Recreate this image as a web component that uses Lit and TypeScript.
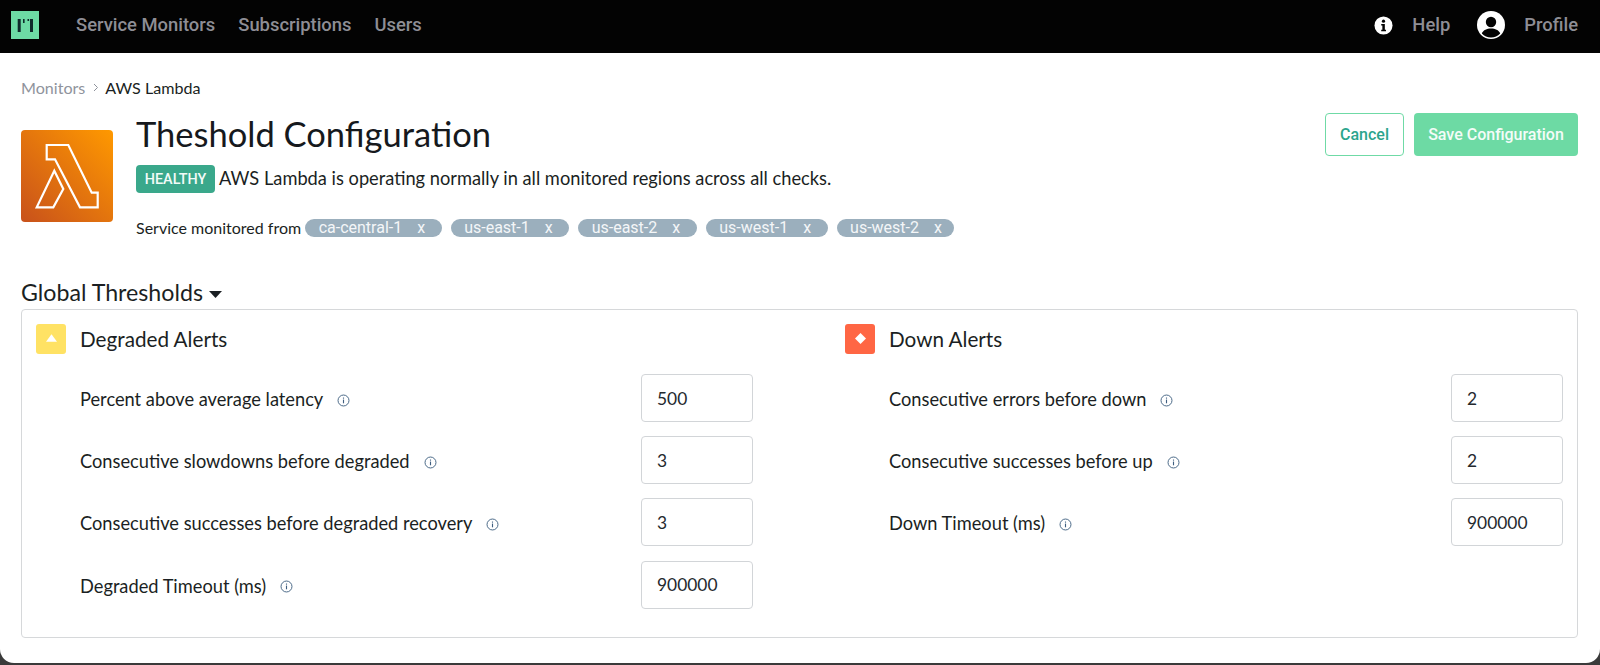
import { LitElement, html, css } from "lit";
import { customElement } from "lit/decorators.js";

const info = html`<svg class="tip" viewBox="0 0 14 14" width="13" height="13"><circle cx="7" cy="7" r="5.9" fill="none" stroke="#3f5f80" stroke-width="1"/><rect x="6.4" y="6" width="1.2" height="4" fill="#3f5f80"/><rect x="6.4" y="3.8" width="1.2" height="1.2" fill="#3f5f80"/></svg>`;

const regions = ["ca-central-1", "us-east-1", "us-east-2", "us-west-1", "us-west-2"];
const degraded = [
  ["Percent above average latency", "500"],
  ["Consecutive slowdowns before degraded", "3"],
  ["Consecutive successes before degraded recovery", "3"],
  ["Degraded Timeout (ms)", "900000"],
];
const down = [
  ["Consecutive errors before down", "2"],
  ["Consecutive successes before up", "2"],
  ["Down Timeout (ms)", "900000"],
];

@customElement("app-root")
export class AppRoot extends LitElement {
  static styles = css`
    :host { display: block; height: 665px; background: #3a3a3a; font-family: Lato, "Liberation Sans", sans-serif; color: #1b1f23; overflow: hidden; }
    .page { height: 663px; background: #fff; border-radius: 0 0 14px 14px; overflow: hidden; }
    header { height: 53px; box-sizing: border-box; padding: 0 22px 3px 11px; background: #030303; display: flex; align-items: center; font-family: Roboto, sans-serif; font-weight: 500; font-size: 18.4px; color: #8e8e95; }
    header span { margin-bottom: 1px; }
    .logo { width: 28px; height: 28px; margin-right: 37px; display: block; }
    .nav { margin-right: 23px; }
    .spacer { flex: 1; }
    .help-i { margin-right: 19px; margin-left: 1px; display: block; }
    .prof-i { margin: 0 19px 0 27px; display: block; }
    main { padding: 0 22px 0 21px; }
    .crumbs { display: flex; align-items: center; height: 20px; margin-top: 24px; font-size: 16.1px; color: #1b1f23; }
    .crumbs .m { color: #8f939c; }
    .crumbs svg { margin: 0 6px 0 8px; }
    .top { display: flex; margin-top: 15px; height: 158px; }
    .aws { width: 92px; height: 92px; border-radius: 4px; margin-top: 18px; margin-right: 23px; background: linear-gradient(45deg, #c8511b, #f90); flex: none; display: block; }
    .info { flex: 1; }
    h1 { margin: 0; font-weight: 400; font-size: 34.5px; line-height: 44px; color: #16191d; }
    .status { display: flex; align-items: center; margin-top: 9px; font-size: 18.25px; height: 28px; }
    .status-text { margin-bottom: 3px; }
    .badge { background: #3aa88b; color: #f2fbf8; border-radius: 4px; height: 28px; width: 79px; box-sizing: border-box; font-size: 14.4px; font-weight: 500; display: flex; align-items: center; justify-content: center; margin-right: 4px; font-family: Roboto, sans-serif; }
    .regions { display: flex; align-items: center; margin-top: 25px; font-size: 16px; height: 19px; }
    .regions > span:first-child { margin-right: 4px; }
    .pill { background: #9bafbd; color: #f4f6f8; border-radius: 10px; height: 18px; font-family: Roboto, sans-serif; font-size: 16px; line-height: 18px; padding: 0 16.5px 0 13.5px; margin-right: 9px; display: flex; }
    .pill:last-child { padding-right: 12px; }
    .pill i { font-style: normal; margin-left: 15px; }
    .btns { display: flex; gap: 10px; margin-top: 1px; font-family: Roboto, sans-serif; font-weight: 500; font-size: 16px; }
    .btn { height: 43px; box-sizing: border-box; border-radius: 4px; display: flex; align-items: center; justify-content: center; }
    .cancel { width: 79px; border: 1px solid #6fdaa6; color: #2ca58d; background: #fff; }
    .save { width: 164px; background: #6ddaa4; color: #f4fcf8; }
    .section { display: flex; align-items: center; font-size: 23.2px; line-height: 28px; margin-top: 10px; padding-bottom: 4px; box-sizing: border-box; color: #1b1f23; height: 28px; }
    .section svg { margin-left: 6px; margin-top: 5px; }
    .card { margin-top: 1px; height: 329px; box-sizing: border-box; border: 1px solid #d6d8da; border-radius: 4px; padding: 14px 14px 0; display: grid; grid-template-columns: 717px 718px; column-gap: 92px; }
    .col-head { display: flex; align-items: center; height: 30px; font-size: 20.7px; color: #1b1f23; }
    .alert { width: 30px; height: 30px; border-radius: 3px; margin-right: 14px; display: flex; align-items: center; justify-content: center; }
    .yellow { background: #ffe264; }
    .yellow svg { margin-bottom: 3px; }
    .red { background: #ff6644; }
    .red svg { margin-bottom: 2px; }
    .rows { margin-top: 20px; padding-left: 44px; display: grid; row-gap: 14.2px; }
    .row { display: flex; align-items: center; height: 48px; font-size: 18.25px; color: #1b1f23; }
    .row > span { margin-top: 2px; }
    .tip { margin-left: 14px; margin-top: 4px; flex: none; }
    .input { margin-left: auto; width: 112px; height: 48px; box-sizing: border-box; border: 1px solid #d2d5d8; border-radius: 4px; padding-left: 15px; display: flex; align-items: center; font-size: 17.4px; color: #24292e; }
  `;

  private rows(items: string[][]) {
    return html`<div class="rows">
      ${items.map(([l, v]) => html`<div class="row"><span>${l}</span>${info}<div class="input">${v}</div></div>`)}
    </div>`;
  }

  render() {
    return html`<div class="page">
      <header>
        <svg class="logo" viewBox="0 0 28 28">
          <rect width="28" height="28" fill="#6ddaa4"/>
          <rect x="6.7" y="8" width="3" height="13" fill="#0f2a2a"/>
          <rect x="12" y="8" width="1.6" height="4" fill="#0f2a2a"/>
          <rect x="16.5" y="8" width="1.6" height="2" fill="#0f2a2a"/>
          <rect x="19" y="8" width="3" height="13" fill="#0f2a2a"/>
        </svg>
        <span class="nav">Service Monitors</span>
        <span class="nav">Subscriptions</span>
        <span class="nav">Users</span>
        <span class="spacer"></span>
        <svg class="help-i" viewBox="0 0 20 20" width="19" height="19">
          <circle cx="10" cy="10" r="9.5" fill="#fff"/>
          <circle cx="10" cy="5.4" r="1.7" fill="#030303"/>
          <path d="M7.6 8.4h3.8v6h1.2v1.6H7.6v-1.6h1.2v-4.4H7.6z" fill="#030303"/>
        </svg>
        <span>Help</span>
        <svg class="prof-i" viewBox="0 0 28 28" width="28" height="28">
          <circle cx="14" cy="14" r="14" fill="#fff"/>
          <circle cx="14" cy="11" r="5.2" fill="#030303"/>
          <path d="M4.8 22.5c1.6-3.6 5-5 9.2-5s7.6 1.4 9.2 5A12.6 12.6 0 0 1 14 26.5a12.6 12.6 0 0 1-9.2-4z" fill="#030303"/>
        </svg>
        <span>Profile</span>
      </header>
      <main>
        <div class="crumbs">
          <span class="m">Monitors</span>
          <svg width="6" height="9" viewBox="0 0 6 9"><path d="M1 1l3.5 3.5L1 8" fill="none" stroke="#8f939c" stroke-width="1"/></svg>
          <span>AWS Lambda</span>
        </div>
        <div class="top">
          <svg class="aws" viewBox="0 0 92 92" width="92" height="92">
            <path d="M25.7 15H47.3L70.7 62.7H76.7V77.3H59L34 29.3H25.7z M33.3 40.7L42.3 59 32.3 77.3H15.7z" fill="none" stroke="#fff" stroke-width="2.2"/>
          </svg>
          <div class="info">
            <h1>Theshold Configuration</h1>
            <div class="status"><span class="badge">HEALTHY</span><span class="status-text">AWS Lambda is operating normally in all monitored regions across all checks.</span></div>
            <div class="regions">
              <span>Service monitored from</span>
              ${regions.map((r) => html`<span class="pill">${r}<i>x</i></span>`)}
            </div>
          </div>
          <div class="btns">
            <div class="btn cancel">Cancel</div>
            <div class="btn save">Save Configuration</div>
          </div>
        </div>
        <div class="section">Global Thresholds<svg width="13" height="7" viewBox="0 0 13 7"><path d="M0 0h13L6.5 7z" fill="#1b1f23"/></svg></div>
        <div class="card">
          <div>
            <div class="col-head"><span class="alert yellow"><svg width="11" height="8" viewBox="0 0 10 7"><path d="M5 0l5 7H0z" fill="#fff"/></svg></span>Degraded Alerts</div>
            ${this.rows(degraded)}
          </div>
          <div>
            <div class="col-head"><span class="alert red"><svg width="11" height="11" viewBox="0 0 12 12"><path d="M6 0l6 6-6 6-6-6z" fill="#fff"/></svg></span>Down Alerts</div>
            ${this.rows(down)}
          </div>
        </div>
      </main>
    </div>`;
  }
}
